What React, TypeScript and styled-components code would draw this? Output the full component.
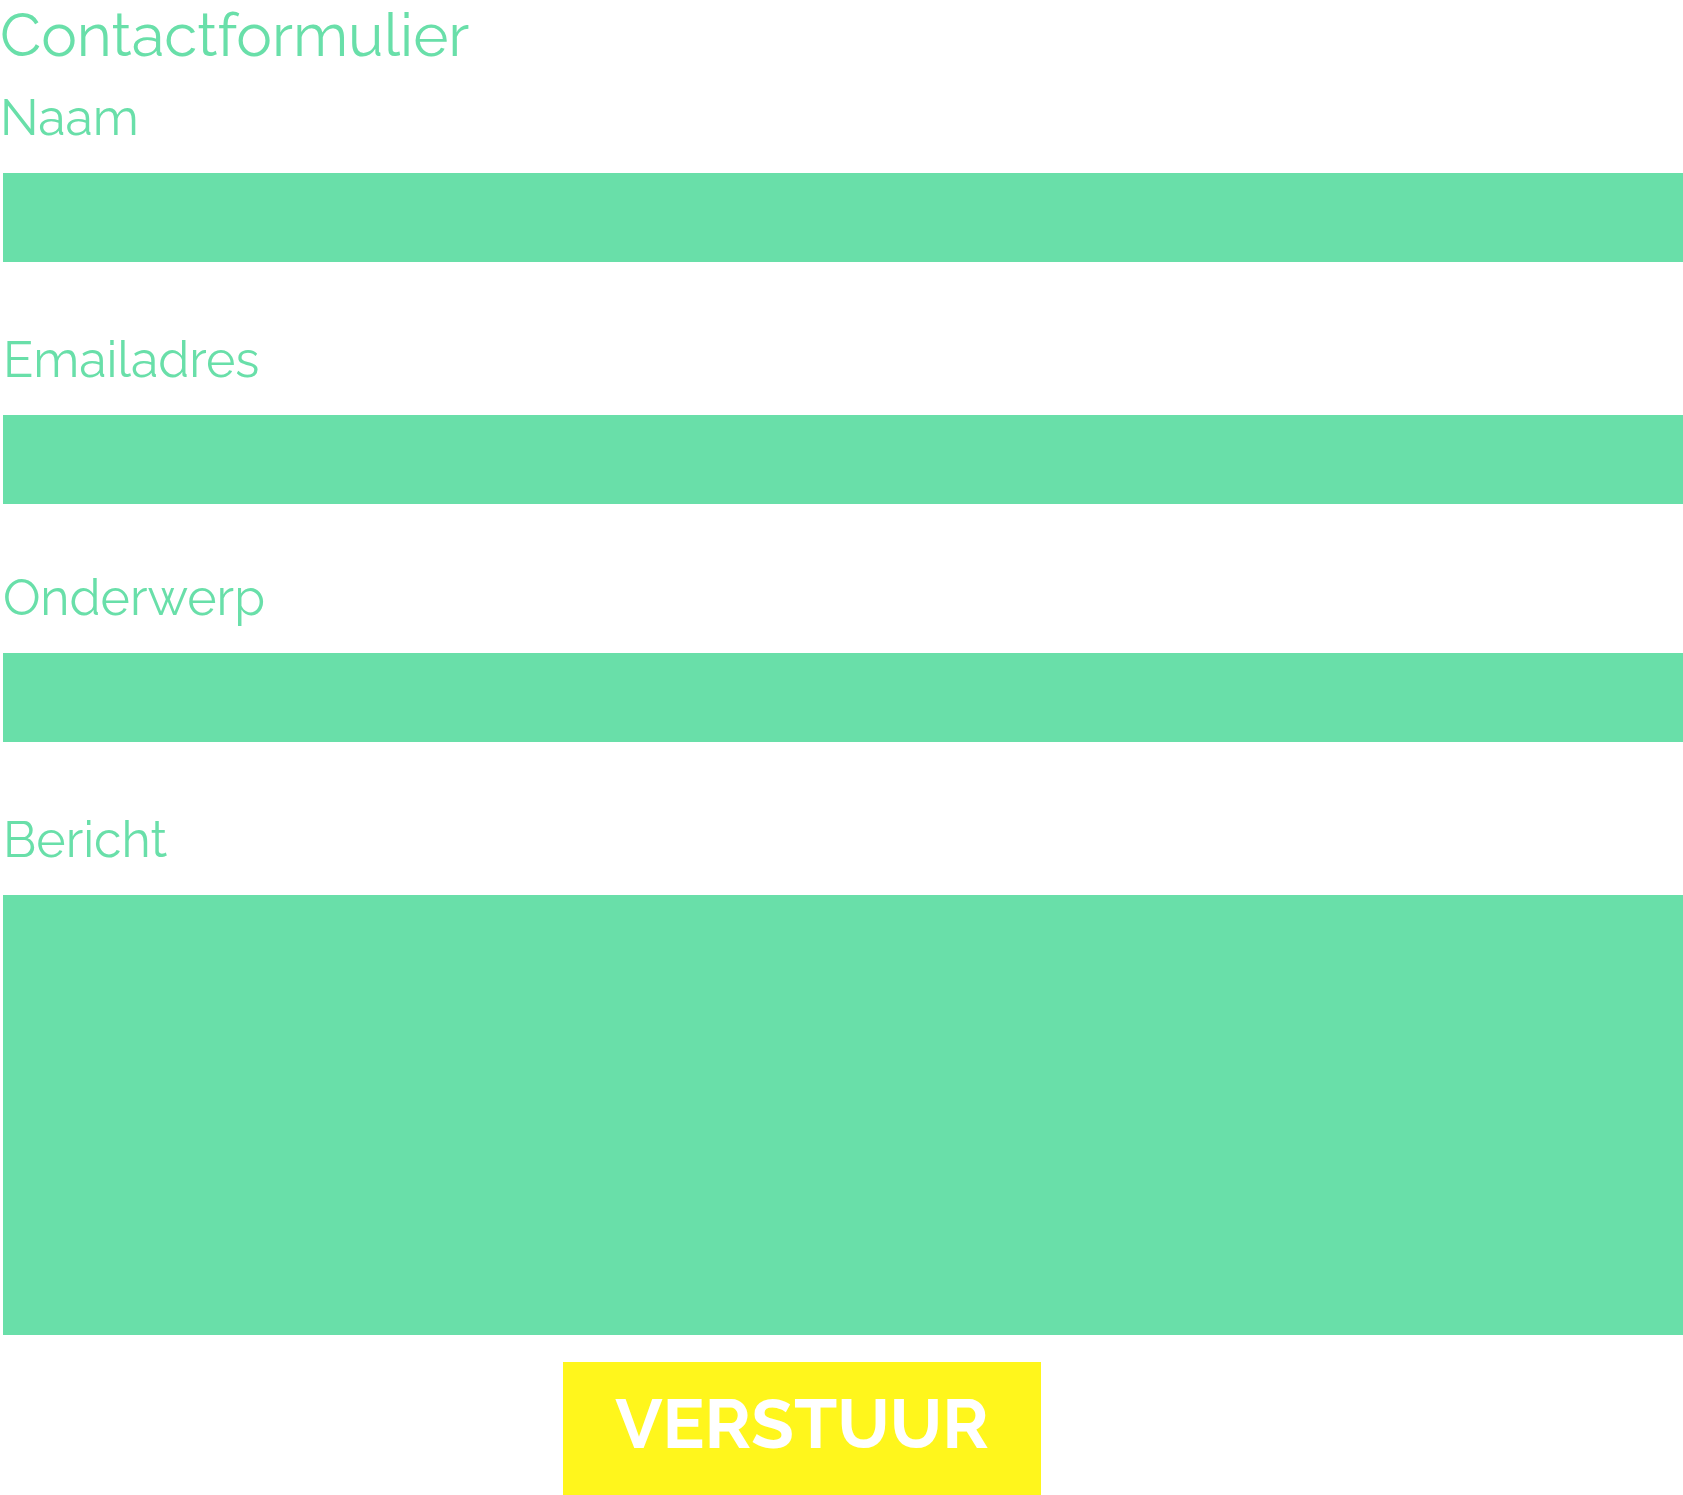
import React from "react";
import styled, { createGlobalStyle, css } from "styled-components";

const mint = "#69dfa9";
const yellow = "#fff61c";

const GlobalStyle = createGlobalStyle`
  *, *::before, *::after {
    box-sizing: border-box;
  }

  body {
    margin: 0;
    background: #ffffff;
    color: ${mint};
    font-family: Raleway, Lato, "Open Sans", sans-serif;
  }
`;

const Form = styled.form`
  display: flex;
  flex-direction: column;
`;

const Title = styled.h1`
  margin: 0 0 16px;
  font-size: 60px;
  font-weight: 400;
  line-height: 70px;
`;

const Field = styled.div<{ $space?: number; $flush?: boolean }>`
  display: flex;
  flex-direction: column;
  padding-left: 3px;
  margin-bottom: ${({ $space = 66 }) => $space}px;

  label {
    margin-left: ${({ $flush }) => ($flush ? "-3px" : "0")};
  }
`;

const Label = styled.label`
  margin-bottom: 23px;
  font-size: 50px;
  line-height: 64px;
`;

const control = css`
  display: block;
  width: 100%;
  margin: 0;
  padding: 12px 20px;
  border: 0;
  border-radius: 0;
  background: ${mint};
  color: #ffffff;
  font: inherit;
  font-size: 40px;

  &:focus-visible {
    outline: 4px solid ${yellow};
    outline-offset: -4px;
  }
`;

const TextInput = styled.input`
  ${control}
  height: 89px;
`;

const MessageBox = styled.textarea`
  ${control}
  height: 440px;
  resize: none;
`;

const Actions = styled.div`
  display: flex;
  justify-content: center;
  padding-right: 79px;
`;

const SubmitButton = styled.button`
  width: 478px;
  max-width: 100%;
  padding: 19px 24px 30px;
  border: 0;
  background: ${yellow};
  color: #ffffff;
  font: inherit;
  font-size: 70px;
  font-weight: 700;
  line-height: 84px;
  text-transform: uppercase;
  cursor: pointer;
`;

export default function App() {
  return (
    <>
      <GlobalStyle />
      <Form onSubmit={(event) => event.preventDefault()}>
        <Title>Contactformulier</Title>
        <Field $flush>
          <Label htmlFor="naam">Naam</Label>
          <TextInput id="naam" name="naam" type="text" />
        </Field>
        <Field $space={62}>
          <Label htmlFor="emailadres">Emailadres</Label>
          <TextInput id="emailadres" name="emailadres" type="email" />
        </Field>
        <Field>
          <Label htmlFor="onderwerp">Onderwerp</Label>
          <TextInput id="onderwerp" name="onderwerp" type="text" />
        </Field>
        <Field $space={27}>
          <Label htmlFor="bericht">Bericht</Label>
          <MessageBox id="bericht" name="bericht" />
        </Field>
        <Actions>
          <SubmitButton type="submit">Verstuur</SubmitButton>
        </Actions>
      </Form>
    </>
  );
}
